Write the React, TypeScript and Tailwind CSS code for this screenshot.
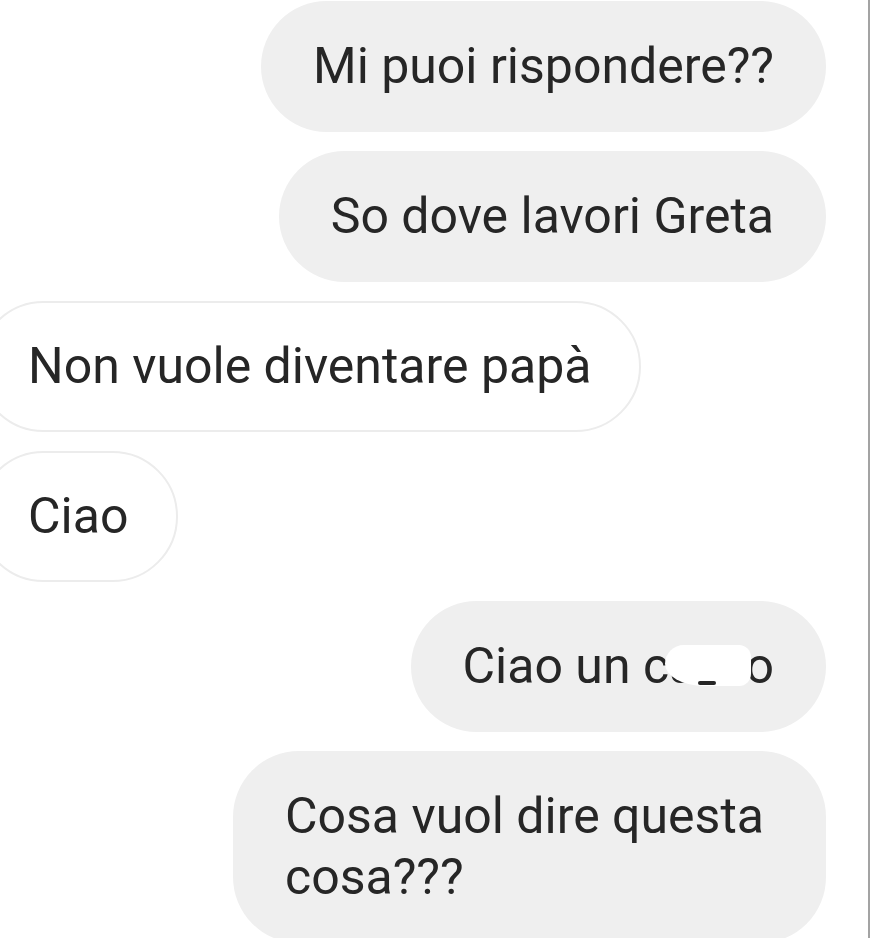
import React from "react";

type Msg = {
  text: string;
  mine: boolean;
  censor?: boolean;
};

const messages: Msg[] = [
  { text: "Mi puoi rispondere??", mine: true },
  { text: "So dove lavori Greta", mine: true },
  { text: "Non vuole diventare papà", mine: false },
  { text: "Ciao", mine: false },
  { text: "Ciao un cazzo", mine: true, censor: true },
  { text: "Cosa vuol dire questa cosa???", mine: true },
];

export default function App() {
  return (
    <div
      className="h-[938px] w-[870px] overflow-hidden border-r-2 border-[#a3a3a3] bg-white"
      style={{ fontFamily: "Roboto, 'Noto Sans', sans-serif" }}
    >
      <div className="flex flex-col gap-[19px] pt-[1px]">
        {messages.map((m, i) => (
          <Bubble key={i} msg={m} />
        ))}
      </div>
    </div>
  );
}

function Bubble({ msg }: { msg: Msg }) {
  if (msg.mine) {
    return (
      <div className="flex justify-end pr-[42px]">
        <div className="relative max-w-[593px] rounded-[66px] bg-[#efefef] px-[52px] py-[35px] text-[50px] leading-[61px] text-[#262626]">
          {msg.text}
          {/* white scribble hiding part of the word */}
          {msg.censor && (
            <>
              <span className="absolute left-[254px] top-[44px] h-[41px] w-[86px] rounded-tl-[22px] rounded-bl-[46px_26px] rounded-r-[14px] bg-white" />
              <span className="absolute left-[287px] top-[80px] h-[4px] w-[18px] rounded-sm bg-[#262626]" />
            </>
          )}
        </div>
      </div>
    );
  }
  return (
    <div className="flex justify-start">
      <div className="-ml-[22px] rounded-[66px] border-2 border-[#ececec] bg-white px-[48px] py-[33px] text-[50px] leading-[61px] text-[#262626]">
        {msg.text}
      </div>
    </div>
  );
}
